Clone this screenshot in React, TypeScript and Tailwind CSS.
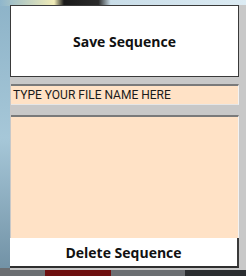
export default function App() {
  return (
    <div className="relative w-[246px] h-[276px] overflow-hidden bg-[#3a3f44]">
      <svg className="absolute inset-0" width="246" height="276" viewBox="0 0 246 276">
        <defs>
          <linearGradient id="top" x1="0" x2="1" y1="0" y2="0">
            <stop offset="0" stopColor="#8fb6cc" />
            <stop offset="0.22" stopColor="#f1ecb8" />
            <stop offset="0.26" stopColor="#1a1a1a" />
            <stop offset="0.4" stopColor="#2a2a2a" />
            <stop offset="0.45" stopColor="#c9dde8" />
            <stop offset="1" stopColor="#dcebf3" />
          </linearGradient>
          <linearGradient id="left" x1="0" x2="0" y1="0" y2="1">
            <stop offset="0" stopColor="#8db3c8" />
            <stop offset="0.5" stopColor="#a6c7d8" />
            <stop offset="1" stopColor="#6f8fa3" />
          </linearGradient>
        </defs>
        <rect x="0" y="0" width="246" height="276" fill="url(#left)" />
        <rect x="0" y="0" width="246" height="6" fill="url(#top)" />
        <rect x="0" y="268" width="246" height="8" fill="#6b6e72" />
        <rect x="45" y="269" width="66" height="7" fill="#6e0f0f" />
        <rect x="185" y="268" width="61" height="8" fill="#2a2d30" />
      </svg>
      <div className="relative pt-[5px] pl-[10px]">
        <div className="flex h-[265px] w-[236px] flex-col bg-[#c8c8c8] font-['Open_Sans',sans-serif]">
          <div className="flex h-[72px] w-[229px] items-center justify-center border border-[#3a3a3a] bg-white text-[14px] font-bold text-[#111]">
            Save Sequence
          </div>
          <div className="mt-[7px] ml-px flex h-[21px] w-[228px] items-center border-t-2 border-r border-b border-t-[#7a7a7a] border-r-[#f2f2f2] border-b-[#e6e6e6] bg-[#ffe2c6] pl-[2px] font-['Roboto',sans-serif] text-[12px] leading-none text-[#1a1a1a]">
            TYPE YOUR FILE NAME HERE
          </div>
          <div className="mt-[10px] ml-px h-[123px] w-[228px] border-t-2 border-r border-t-[#7a7a7a] border-r-[#f2f2f2] bg-[#ffe2c6]" />
          <div className="flex h-[30px] w-[229px] items-center justify-center border-r-2 border-b-2 border-r-[#3a3a3a] border-b-[#2e2e2e] bg-white text-[14px] font-bold text-[#111]">
            Delete Sequence
          </div>
        </div>
      </div>
    </div>
  );
}
